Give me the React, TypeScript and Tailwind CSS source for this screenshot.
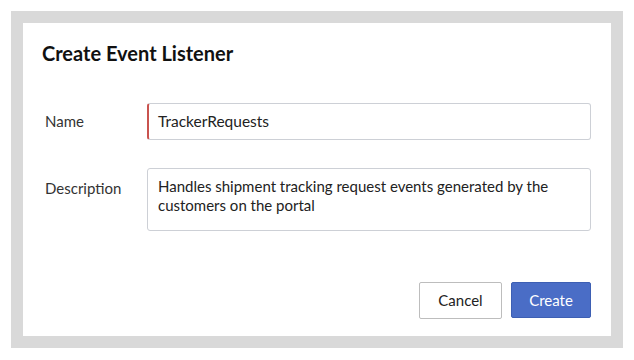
export default function App() {
  return (
    <div className="h-[360px] w-[634px] bg-white p-[11px] font-['Lato','Liberation_Sans',sans-serif] text-[#222]">
      <div className="h-[337px] w-[612px] border-[12px] border-[#d9d9d9] bg-white">
        <div className="flex h-full flex-col pl-[19px] pr-[20px] pt-[18px]">
          <h1 className="text-[20px] font-bold leading-[24px] text-[#111]">Create Event Listener</h1>

          <div className="mt-[38px] flex items-center">
            <label className="w-[105px] pl-[3px] text-[15px] text-[#333]">Name</label>
            <div className="flex h-[37px] flex-1 items-center rounded-[3px] border border-[#cdd0d6] border-l-2 border-l-[#c9534f] pl-[9px] text-[15.5px] text-[#222]">
              TrackerRequests
            </div>
          </div>

          <div className="mt-[28px] flex items-start">
            <label className="w-[105px] pl-[3px] pt-[9px] text-[15px] text-[#333]">Description</label>
            <div className="h-[63px] flex-1 rounded-[3px] border border-[#cdd0d6] px-[10px] pt-[8px] text-[15px] leading-[19px] text-[#222]">
              Handles shipment tracking request events generated by the customers on the portal
            </div>
          </div>

          <div className="mt-[51px] flex justify-end gap-[9px]">
            <button className="h-[37px] w-[83px] rounded-[2px] border border-[#bdbdbd] bg-white text-[15px] text-[#222]">
              Cancel
            </button>
            <button className="h-[36px] w-[80px] rounded-[2px] border border-[#3d5fb3] bg-[#4a6dc6] text-[15px] text-white">
              Create
            </button>
          </div>
        </div>
      </div>
    </div>
  );
}
